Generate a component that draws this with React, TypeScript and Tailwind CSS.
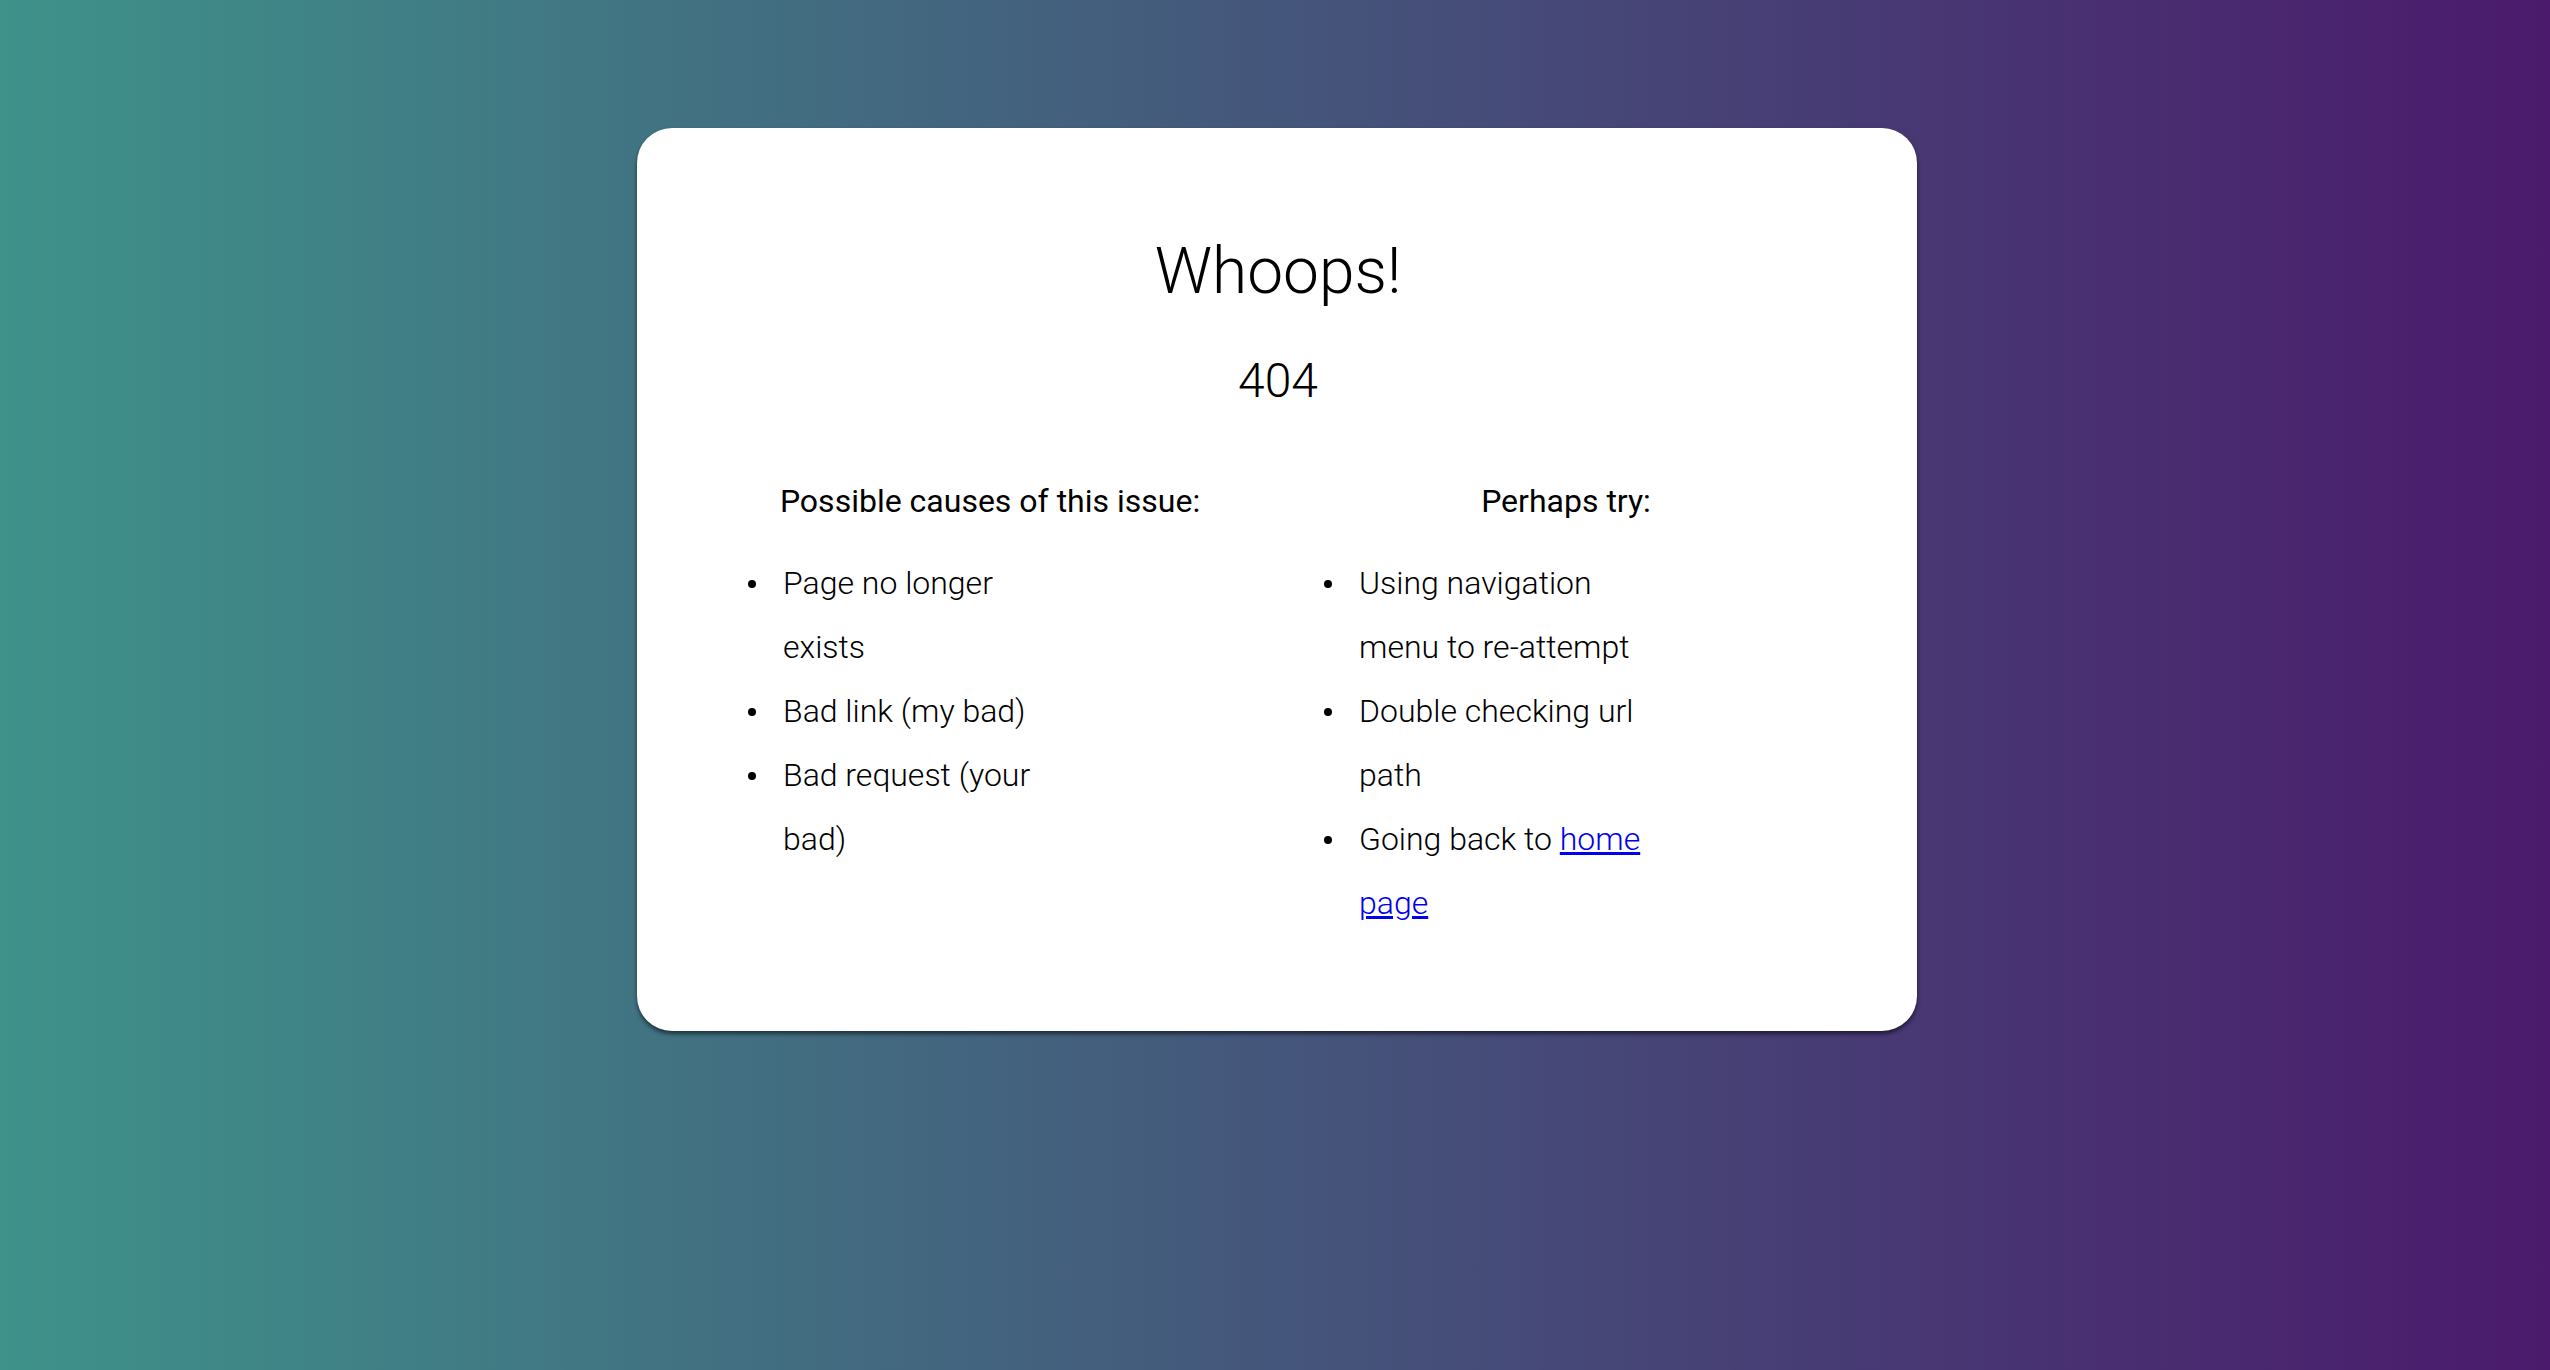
const causes = ["Page no longer exists", "Bad link (my bad)", "Bad request (your bad)"];

function Item({ children }: { children: React.ReactNode }) {
  return (
    <li className="flex items-start">
      <span className="ml-[5px] mr-[27px] mt-[29px] h-[8px] w-[8px] shrink-0 rounded-full bg-black" />
      <div className="min-w-0 flex-1">{children}</div>
    </li>
  );
}

export default function App() {
  return (
    <div className="flex min-h-screen w-full flex-col items-center bg-[linear-gradient(to_right,#3e928a,#4b1a6c)] pt-[128px] font-['Roboto',sans-serif] text-black">
      <div className="ml-[4px] flex w-[1280px] flex-col items-center rounded-[35px] bg-white pb-[96px] pl-[106px] pr-[104px] pt-[112px] shadow-[0_3px_4px_rgba(0,0,0,0.55)]">
        <h1 className="text-[64px] font-light leading-none">Whoops!</h1>
        <h2 className="mt-[53px] text-[48px] font-light leading-none">404</h2>

        <div className="mt-[80px] flex w-full justify-between">
          <div className="flex w-[494px] flex-col">
            <h3 className="text-center text-[32px] font-normal leading-none">Possible causes of this issue:</h3>
            <ul className="mt-[34px] w-[326px] text-[32px] font-light leading-[64px]">
              {causes.map((c) => (
                <Item key={c}>{c}</Item>
              ))}
            </ul>
          </div>

          <div className="flex w-[494px] flex-col">
            <h3 className="text-center text-[32px] font-normal leading-none">Perhaps try:</h3>
            <ul className="mt-[34px] w-[326px] text-[32px] font-light leading-[64px]">
              <Item>Using navigation menu to re-attempt</Item>
              <Item>Double checking url path</Item>
              <Item>
                Going back to{" "}
                <a href="#" className="text-[#0000ee] underline">
                  home page
                </a>
              </Item>
            </ul>
          </div>
        </div>
      </div>
    </div>
  );
}
